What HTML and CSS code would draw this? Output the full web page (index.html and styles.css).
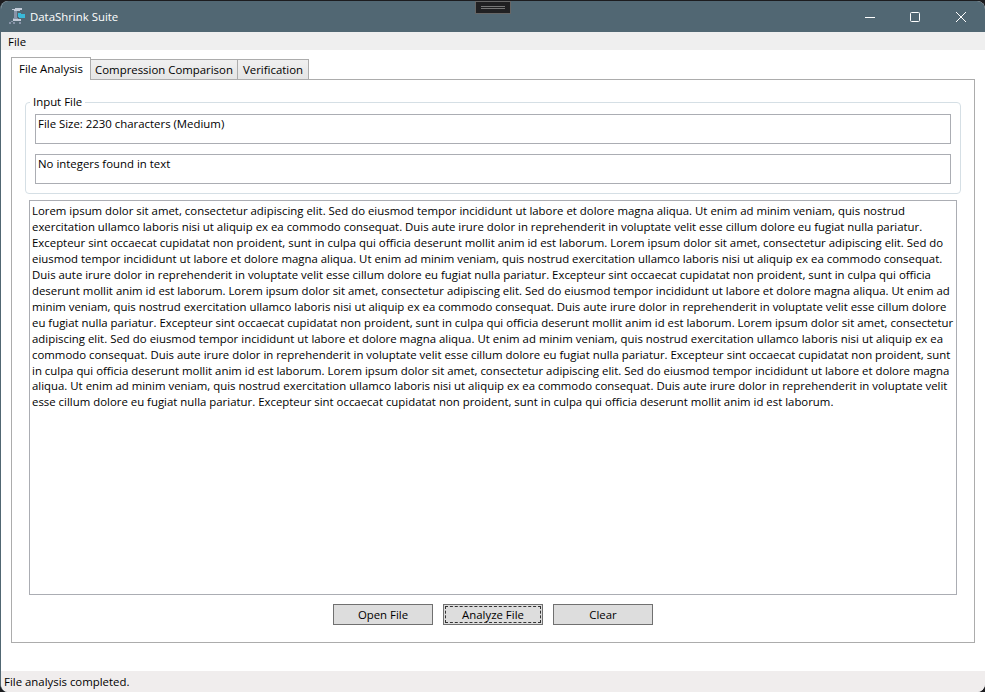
FILE: index.html
```html
<!DOCTYPE html>
<html lang="en">
<head>
<meta charset="utf-8">
<title>DataShrink Suite</title>
<link rel="stylesheet" href="styles.css">
</head>
<body>
<div class="window">
  <header class="titlebar">
    <svg class="logo" width="18" height="18" viewBox="0 0 18 18" shape-rendering="crispEdges">
      <path fill="#c3cbd8" d="M3 1h3V0h7v2h-2v1H5V2H3zM4 11h8v2H4z"/>
      <path fill="#8894a8" d="M5 3h3v8H5zM4 10h5v1H4zM0 14h2v2H0zM4 14h2v2H4zM10 14h2v2h-2zM2 13h2v1H2z"/>
      <path fill="#39b9d8" d="M9 5h3v1h4v4h-6V9H9z"/>
    </svg>
    <span class="title">DataShrink Suite</span>
    <div class="controls">
      <svg width="46" height="30" viewBox="0 0 46 30"><path d="M18 15.5h10"/></svg>
      <svg width="46" height="30" viewBox="0 0 46 30"><rect x="17.5" y="10.5" width="9" height="9" rx="1"/></svg>
      <svg width="46" height="30" viewBox="0 0 46 30"><path d="M17 10l10 10M27 10L17 20"/></svg>
    </div>
    <div class="grip"><i></i><i></i></div>
  </header>
  <nav class="menu"><span>File</span></nav>
  <main class="content">
    <div class="tabs">
      <div class="tab active"><span>File Analysis</span></div>
      <div class="tab compare"><span>Compression Comparison</span></div>
      <div class="tab verify"><span>Verification</span></div>
    </div>
    <section class="panel">
      <fieldset class="group">
        <legend>Input File</legend>
        <div class="field"><span>File Size: 2230 characters (Medium)</span></div>
        <div class="field"><span>No integers found in text</span></div>
      </fieldset>
      <div class="document">
        <p class="w871">Lorem ipsum dolor sit amet, consectetur adipiscing elit. Sed do eiusmod tempor incididunt ut labore et dolore magna aliqua. Ut enim ad minim veniam, quis nostrud</p>
        <p class="w885">exercitation ullamco laboris nisi ut aliquip ex ea commodo consequat. Duis aute irure dolor in reprehenderit in voluptate velit esse cillum dolore eu fugiat nulla pariatur.</p>
        <p class="w909">Excepteur sint occaecat cupidatat non proident, sunt in culpa qui officia deserunt mollit anim id est laborum. Lorem ipsum dolor sit amet, consectetur adipiscing elit. Sed do</p>
        <p class="w907">eiusmod tempor incididunt ut labore et dolore magna aliqua. Ut enim ad minim veniam, quis nostrud exercitation ullamco laboris nisi ut aliquip ex ea commodo consequat.</p>
        <p class="w895">Duis aute irure dolor in reprehenderit in voluptate velit esse cillum dolore eu fugiat nulla pariatur. Excepteur sint occaecat cupidatat non proident, sunt in culpa qui officia</p>
        <p class="w917">deserunt mollit anim id est laborum. Lorem ipsum dolor sit amet, consectetur adipiscing elit. Sed do eiusmod tempor incididunt ut labore et dolore magna aliqua. Ut enim ad</p>
        <p class="w909">minim veniam, quis nostrud exercitation ullamco laboris nisi ut aliquip ex ea commodo consequat. Duis aute irure dolor in reprehenderit in voluptate velit esse cillum dolore</p>
        <p class="w916">eu fugiat nulla pariatur. Excepteur sint occaecat cupidatat non proident, sunt in culpa qui officia deserunt mollit anim id est laborum. Lorem ipsum dolor sit amet, consectetur</p>
        <p class="w911">adipiscing elit. Sed do eiusmod tempor incididunt ut labore et dolore magna aliqua. Ut enim ad minim veniam, quis nostrud exercitation ullamco laboris nisi ut aliquip ex ea</p>
        <p class="w913">commodo consequat. Duis aute irure dolor in reprehenderit in voluptate velit esse cillum dolore eu fugiat nulla pariatur. Excepteur sint occaecat cupidatat non proident, sunt</p>
        <p class="w917">in culpa qui officia deserunt mollit anim id est laborum. Lorem ipsum dolor sit amet, consectetur adipiscing elit. Sed do eiusmod tempor incididunt ut labore et dolore magna</p>
        <p class="w910">aliqua. Ut enim ad minim veniam, quis nostrud exercitation ullamco laboris nisi ut aliquip ex ea commodo consequat. Duis aute irure dolor in reprehenderit in voluptate velit</p>
        <p class="w798">esse cillum dolore eu fugiat nulla pariatur. Excepteur sint occaecat cupidatat non proident, sunt in culpa qui officia deserunt mollit anim id est laborum.</p>
      </div>
      <div class="actions">
        <button>Open File</button>
        <button class="focused">Analyze File</button>
        <button>Clear</button>
      </div>
    </section>
  </main>
  <footer class="status">File analysis completed.</footer>
</div>
</body>
</html>
```
FILE: styles.css
```css
* { box-sizing: border-box; }
body {
  margin: 0;
  height: 692px;
  padding-top: 1px;
  overflow: hidden;
  background: #1c1c1f;
  color: #000;
  font: 11.4px/16px "Open Sans", "Noto Sans", sans-serif;
}
.window {
  height: 691px;
  display: flex;
  flex-direction: column;
  border-left: 1px solid #516773;
  border-radius: 8px;
  overflow: hidden;
  background: #fff;
}
.titlebar {
  position: relative;
  flex: 0 0 31px;
  display: flex;
  align-items: center;
  padding-left: 8px;
  background: #516773;
  color: #fff;
}
.title { margin-left: 3px; }
.controls { display: flex; margin-left: auto; }
.controls svg { fill: none; stroke: #fff; stroke-width: 1; }
.grip {
  position: absolute;
  left: 474px;
  top: 0;
  width: 36px;
  height: 13px;
  padding: 4px 5px;
  background: #202022;
  border: 1px solid #666;
}
.grip i { display: block; height: 1px; margin-bottom: 1px; background: #777; }
.menu { flex: 0 0 18px; padding: 2px 7px 0; background: #efefef; }
.content { padding: 7px 10px 0; flex: 1; }
.tabs { display: flex; align-items: flex-end; height: 23px; position: relative; z-index: 1; }
.tab {
  display: flex;
  align-items: center;
  justify-content: center;
  height: 21px;
  margin-bottom: 0;
  border: 1px solid #acacac;
  border-left-width: 0;
  background: linear-gradient(#f0f0f0, #e5e5e5);
}
.tab.active { width: 80px; height: 23px; border-left-width: 1px; border-bottom: 0; background: #fff; }
.tab.compare { width: 147px; }
.tab.verify { width: 71px; }
.panel {
  width: 964px;
  height: 564px;
  margin-top: -1px;
  padding: 14px 13px 0;
  border: 1px solid #acacac;
}
.group {
  width: 936px;
  height: 100px;
  margin: 0;
  padding: 4px 9px 0;
  border: 1px solid #d5dfe5;
  border-radius: 4px;
}
.group legend { margin-left: -5px; padding: 0 3px; }
.field { height: 30px; padding: 1px 2px; margin-bottom: 10px; border: 1px solid #abadb3; }
.document {
  width: 928px;
  height: 395px;
  margin: 6px 0 0 4px;
  padding: 2px;
  border: 1px solid #abadb3;
  line-height: 15.96px;
}
.document p { margin: 0; white-space: nowrap; text-align-last: justify; }
.w871 { width: 871px; }
.w885 { width: 885px; }
.w909 { width: 909px; }
.w907 { width: 907px; }
.w895 { width: 895px; }
.w917 { width: 917px; }
.w916 { width: 916px; }
.w911 { width: 911px; }
.w913 { width: 913px; }
.w910 { width: 910px; }
.w798 { width: 798px; }
.actions { display: flex; gap: 10px; justify-content: center; margin-top: 9px; }
button {
  width: 100px;
  height: 21px;
  padding: 0;
  border: 1px solid #707070;
  border-radius: 0;
  background: #ddd;
  color: #000;
  font: inherit;
}
.focused { outline: 1px dashed #333; outline-offset: -3px; }
.status { flex: 0 0 21px; padding: 3px 3px 0; background: #f0eded; }
```
